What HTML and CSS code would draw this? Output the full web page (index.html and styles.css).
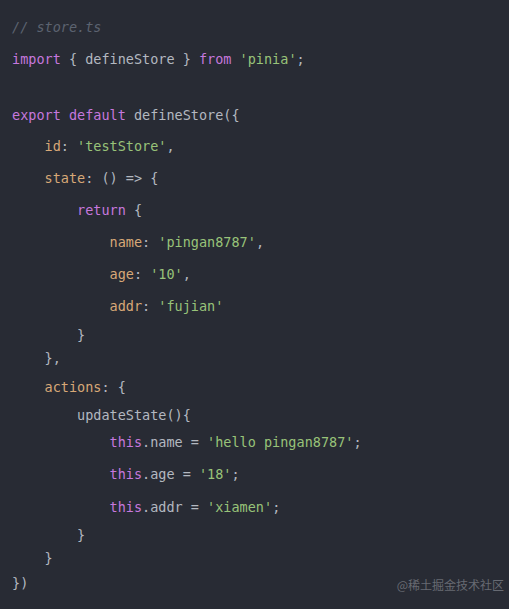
FILE: index.html
```html
<!DOCTYPE html>
<html>
<head>
<meta charset="utf-8">
<link rel="stylesheet" href="styles.css">
</head>
<body>
<div class="code">
<div class="ln"><span class="c">// store.ts</span></div>
<div class="ln"><span class="k">import</span> { defineStore } <span class="k">from</span> <span class="s">'pinia'</span>;</div>
<div class="ln blank"></div>
<div class="ln"><span class="k">export</span> <span class="k">default</span> defineStore({</div>
<div class="ln m1">    <span class="p">id</span>: <span class="s">'testStore'</span>,</div>
<div class="ln">    <span class="p">state</span>: () =&gt; {</div>
<div class="ln">        <span class="k">return</span> {</div>
<div class="ln">            <span class="p">name</span>: <span class="s">'pingan8787'</span>,</div>
<div class="ln">            <span class="p">age</span>: <span class="s">'10'</span>,</div>
<div class="ln">            <span class="p">addr</span>: <span class="s">'fujian'</span></div>
<div class="ln m3">        }</div>
<div class="ln m9">    },</div>
<div class="ln m3">    <span class="p">actions</span>: {</div>
<div class="ln m4">        updateState(){</div>
<div class="ln m5">            <span class="k">this</span>.name = <span class="s">'hello pingan8787'</span>;</div>
<div class="ln">            <span class="k">this</span>.age = <span class="s">'18'</span>;</div>
<div class="ln p1">            <span class="k">this</span>.addr = <span class="s">'xiamen'</span>;</div>
<div class="ln m4">        }</div>
<div class="ln m9">    }</div>
<div class="ln m7">})</div>
</div>
<div class="wm">@稀土掘金技术社区</div>
</body>
</html>
```

FILE: styles.css
```css
html, body {
  margin: 0;
  padding: 0;
  background: #282b34;
  height: 100%;
  overflow: hidden;
}
body {
  position: relative;
}
.code {
  padding: 11px 0 0 12px;
  font-family: "DejaVu Sans Mono", "Liberation Mono", monospace;
  font-size: 13.5px;
  color: #b3b8c0;
}
.ln {
  white-space: pre;
  height: 32px;
  line-height: 32px;
}
.ln.blank { height: 24px; }
.m1 { margin-top: -1px; }
.m3 { margin-top: -3px; }
.m4 { margin-top: -4px; }
.m5 { margin-top: -5px; }
.m7 { margin-top: -7px; }
.m9 { margin-top: -9px; }
.p1 { margin-top: 1px; }
.c { color: #5c6370; font-style: italic; }
.k { color: #c678dd; }
.s { color: #98c379; }
.p { color: #d7a877; }
.wm {
  position: absolute;
  right: 5px;
  top: 577px;
  font-family: "Noto Sans CJK SC", sans-serif;
  font-size: 12px;
  line-height: 16px;
  color: #676a72;
}
```
